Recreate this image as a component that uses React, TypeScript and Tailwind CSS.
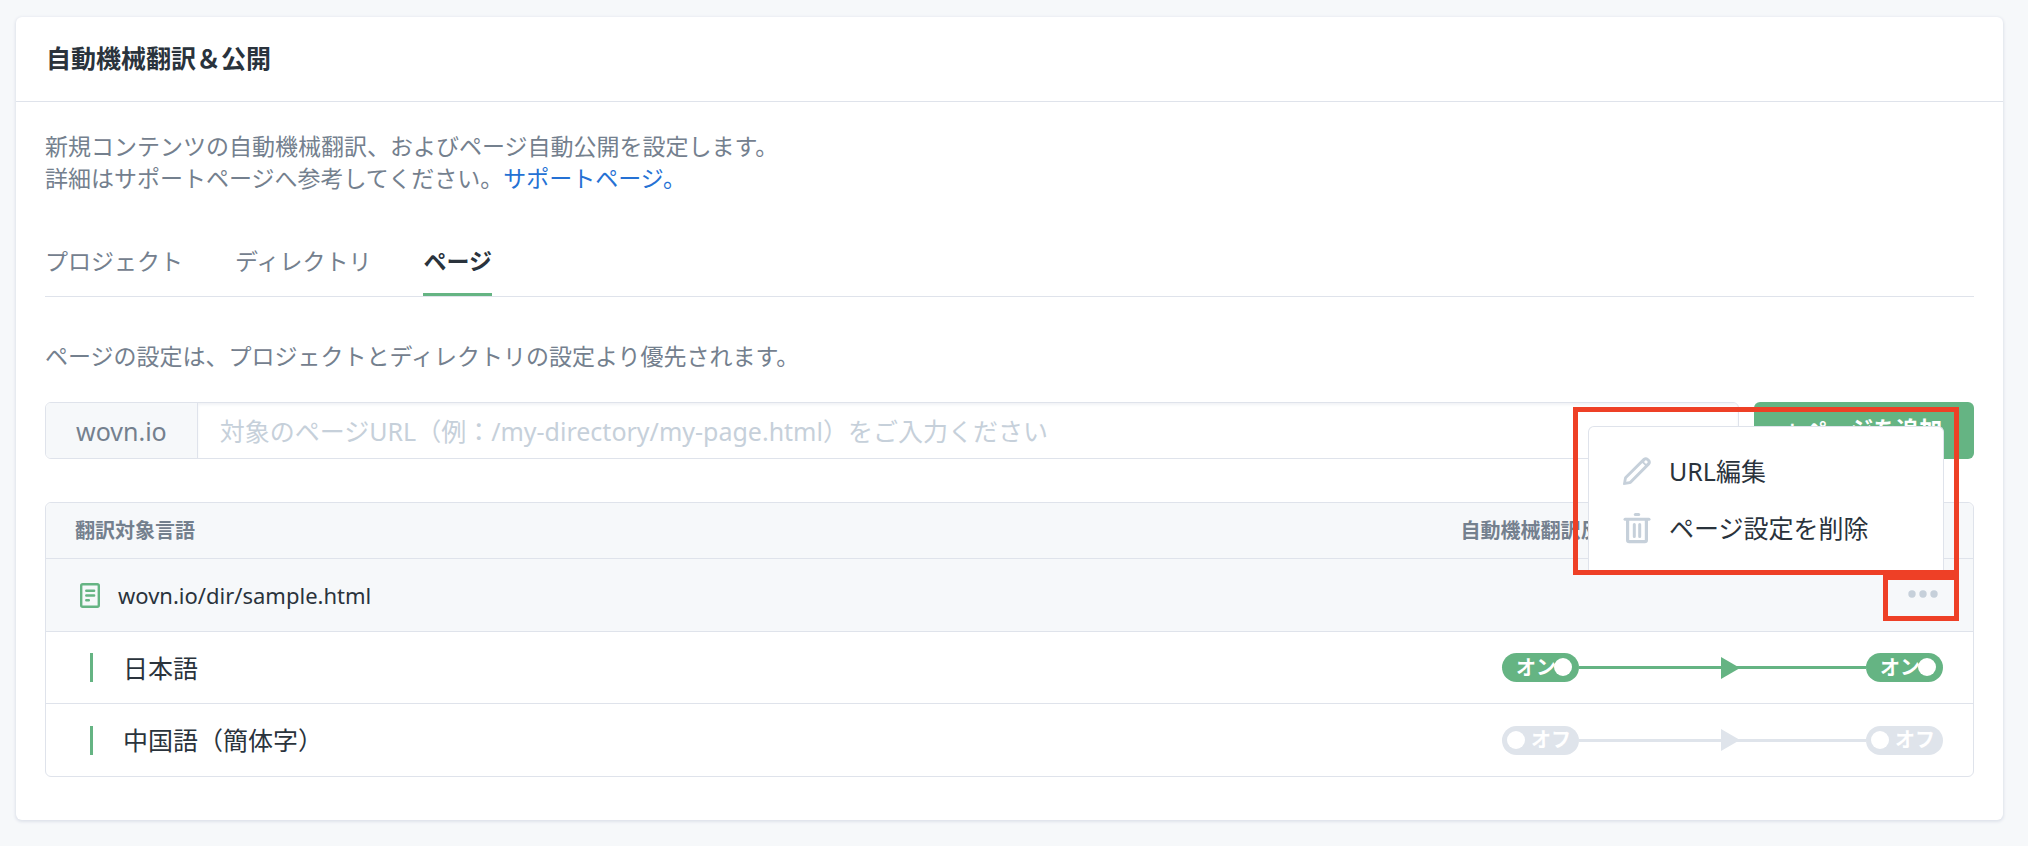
import { useState } from 'react';
import clsx from 'clsx';

interface LanguageSetting {
  id: string;
  name: string;
  translate: boolean;
  publish: boolean;
}

const TABS = ['プロジェクト', 'ディレクトリ', 'ページ'];

const INITIAL_LANGUAGES: LanguageSetting[] = [
  { id: 'ja', name: '日本語', translate: true, publish: true },
  { id: 'zh-CHS', name: '中国語（簡体字）', translate: false, publish: false },
];

function PageIcon() {
  return (
    <svg width="20" height="25" viewBox="0 0 20 25" fill="none" stroke="#65b483" strokeLinecap="round" aria-hidden="true">
      <rect x="1.2" y="1.2" width="17.6" height="22.6" rx="1.5" strokeWidth="2.4" />
      <path d="M6.300 7.700h7.800M6.300 12.500h7.800M6.300 17.300h2.500" strokeWidth="2.500" />
    </svg>
  );
}

function PencilIcon() {
  return (
    <svg width="28" height="28" viewBox="0 0 28 28" fill="#c6d0da" fillRule="evenodd" aria-hidden="true">
      <path d="M0.800 28Q0 28 0 27L1 21Q1.200 20 2 19.200L20 1.300Q22.800-1 25.600 1.400L26.700 2.500Q29 5.200 26.700 8L8.800 26Q8 26.800 7 27zM3.800 21.600L3.200 24.800L6.400 24.200L22 8.600L19.400 6zM22.900 3L21 4.900L23.100 7L25 5.100z" />
    </svg>
  );
}

function TrashIcon() {
  return (
    <svg width="28" height="32" viewBox="0 0 28 32" fill="none" stroke="#c6d0da" strokeLinecap="round" aria-hidden="true">
      <path d="M12.300 2.500h3.400" strokeWidth="3" />
      <path d="M2 7.200h24" strokeWidth="3" />
      <path d="M4.600 8v20a1.600 1.600 0 0 0 1.600 1.600h15.600a1.600 1.600 0 0 0 1.600-1.600V8" strokeWidth="3.200" />
      <path d="M11.300 12.500v12M16.700 12.500v12" strokeWidth="3" />
    </svg>
  );
}

function Toggle({ label, checked, onChange }: { label: string; checked: boolean; onChange: () => void }) {
  return (
    <label
      className={clsx(
        'relative flex h-[29px] w-[77px] flex-none cursor-pointer items-center rounded-full text-xl leading-[29px] font-bold text-white',
        checked ? 'bg-[#65b483] pl-[14px]' : 'bg-[#dfe4eb] pl-[29px]',
      )}
    >
      <input type="checkbox" className="sr-only" aria-label={label} checked={checked} onChange={onChange} />
      <span className="-mt-px whitespace-nowrap">{checked ? 'オン' : 'オフ'}</span>
      <span className={clsx('absolute top-[5px] size-[18px] rounded-full bg-white', checked ? 'right-[7px]' : 'left-[5px]')} />
    </label>
  );
}

function Arrow({ active }: { active: boolean }) {
  return (
    <div className="flex flex-1 items-center">
      <div className={clsx('h-[3px] w-[142px]', active ? 'bg-[#65b483]' : 'bg-[#dfe4eb]')} />
      <svg width="19" height="22" viewBox="0 0 19 22" fill={active ? '#65b483' : '#dfe4eb'} aria-hidden="true">
        <path d="M0 0L19 11L0 22z" />
      </svg>
      <div className={clsx('-ml-1 h-[3px] flex-1', active ? 'bg-[#65b483]' : 'bg-[#dfe4eb]')} />
    </div>
  );
}

function PageMenu() {
  return (
    <div className="absolute -right-[5px] bottom-full z-10 mb-[5px] h-[168px] w-[386px] border-5 border-[#ee4026] px-[10px] pt-[14px]">
      <ul className="h-full rounded-t-md border border-b-0 border-[#dfe3eb] bg-white pt-4 pl-[34px] text-[25px] text-[#2a333c]">
        <li>
          <button className="flex h-[57px] items-center gap-[18px]">
            <PencilIcon />
            URL編集
          </button>
        </li>
        <li>
          <button className="flex h-[57px] items-center gap-[18px]">
            <TrashIcon />
            ページ設定を削除
          </button>
        </li>
      </ul>
    </div>
  );
}

export default function App() {
  const [activeTab, setActiveTab] = useState('ページ');
  const [menuOpen, setMenuOpen] = useState(true);
  const [languages, setLanguages] = useState(INITIAL_LANGUAGES);

  const handleToggle = (id: string, key: 'translate' | 'publish') => {
    setLanguages((prev) => prev.map((lang) => (lang.id === id ? { ...lang, [key]: !lang[key] } : lang)));
  };

  return (
    <div className="min-h-screen bg-[#f6f8fa] py-[17px] pr-[25px] pl-4 font-['Noto_Sans','Noto_Sans_CJK_JP',sans-serif] text-[#74808e]">
      <section className="rounded-md bg-white pb-[43px] shadow-[0_1px_3px_1px_#dfe3eb]">
        <h1 className="border-b border-[#dfe3eb] px-[30px] pt-[21px] pb-[23px] text-[25px] leading-10 font-bold text-[#2a333c]">
          自動機械翻訳＆公開
        </h1>

        <div className="px-[29px] pt-7 text-[23px] leading-8">
          <p>
            新規コンテンツの自動機械翻訳、およびページ自動公開を設定します。
            <br />
            詳細はサポートページへ参考してください。
            <a href="#support" className="text-[#2571d4]">サポートページ。</a>
          </p>

          <div role="tablist" className="mt-[51px] flex gap-[52px] border-b border-[#dfe3eb]">
            {TABS.map((tab) => (
              <button
                key={tab}
                role="tab"
                aria-selected={tab === activeTab}
                onClick={() => setActiveTab(tab)}
                className={clsx(
                  'border-b-3 pb-4',
                  tab === activeTab ? 'border-[#65b483] font-bold text-[#2a333c]' : 'border-transparent',
                )}
              >
                {tab}
              </button>
            ))}
          </div>

          <p className="mt-[43px]">ページの設定は、プロジェクトとディレクトリの設定より優先されます。</p>

          <form className="mt-[30px] flex h-[57px] gap-[15px]" onSubmit={(e) => e.preventDefault()}>
            <div className="flex flex-1 overflow-hidden rounded-md border border-[#dfe3eb] text-[25px]">
              <label htmlFor="page-url" className="flex items-center border-r border-[#dfe3eb] bg-[#f6f8fa] px-[30px]">
                wovn.io
              </label>
              <input
                id="page-url"
                type="text"
                placeholder="対象のページURL（例：/my-directory/my-page.html）をご入力ください"
                className="min-w-0 flex-1 px-[22px] shadow-[inset_0_2px_3px_#f1f3f6] outline-none placeholder:text-[#c6d0da]"
              />
            </div>
            <button type="submit" className="w-[220px] rounded-md bg-[#65b483] pb-1 font-bold text-white">
              + ページを追加
            </button>
          </form>

          <table className="mt-[43px] w-full border-separate border-spacing-0 rounded-md border border-[#dfe3eb] text-left text-[25px] text-[#2a333c]">
            <thead>
              <tr className="h-14 bg-[#f6f8fa] text-xl text-[#74808e]">
                <th className="rounded-tl-md border-b border-[#dfe3eb] py-0 pl-[29px] font-bold">翻訳対象言語</th>
                <th className="w-[471px] rounded-tr-md border-b border-[#dfe3eb] py-0 font-bold">
                  <div className="flex w-[77px] justify-center whitespace-nowrap">自動機械翻訳反映</div>
                </th>
              </tr>
            </thead>
            <tbody>
              <tr className="h-[73px] bg-[#f6f8fa] text-[22px]">
                <td className="border-b border-[#dfe3eb] py-0 pl-[34px]">
                  <div className="flex items-center gap-[18px]">
                    <PageIcon />
                    wovn.io/dir/sample.html
                  </div>
                </td>
                <td className="border-b border-[#dfe3eb] py-0 pr-[14px]">
                  <div className="relative ml-auto mt-[5px] h-[46px] w-[76px] border-5 border-[#ee4026]">
                    <button
                      aria-label="メニュー"
                      aria-expanded={menuOpen}
                      onClick={() => setMenuOpen((open) => !open)}
                      className="flex h-7 w-full items-center justify-center pl-1"
                    >
                      <svg width="30" height="8" viewBox="0 0 30 8" fill="#c6d0da" aria-hidden="true">
                        <circle cx="4" cy="4" r="3.700" />
                        <circle cx="15" cy="4" r="3.700" />
                        <circle cx="26" cy="4" r="3.700" />
                      </svg>
                    </button>
                    {menuOpen && <PageMenu />}
                  </div>
                </td>
              </tr>
              {languages.map((lang, index) => {
                const border = index < languages.length - 1 && 'border-b border-[#dfe3eb]';
                return (
                  <tr key={lang.id} className="h-[72px]">
                    <td className={clsx('py-0 pl-11', border)}>
                      <div className="flex items-center gap-[30px]">
                        <span className="h-[29px] w-[3px] bg-[#65b483]" />
                        {lang.name}
                      </div>
                    </td>
                    <td className={clsx('py-0 pr-[30px]', border)}>
                      <div className="flex items-center">
                        <Toggle
                          label={`${lang.name} 自動機械翻訳`}
                          checked={lang.translate}
                          onChange={() => handleToggle(lang.id, 'translate')}
                        />
                        <Arrow active={lang.translate} />
                        <Toggle
                          label={`${lang.name} 自動公開`}
                          checked={lang.publish}
                          onChange={() => handleToggle(lang.id, 'publish')}
                        />
                      </div>
                    </td>
                  </tr>
                );
              })}
            </tbody>
          </table>
        </div>
      </section>
    </div>
  );
}
